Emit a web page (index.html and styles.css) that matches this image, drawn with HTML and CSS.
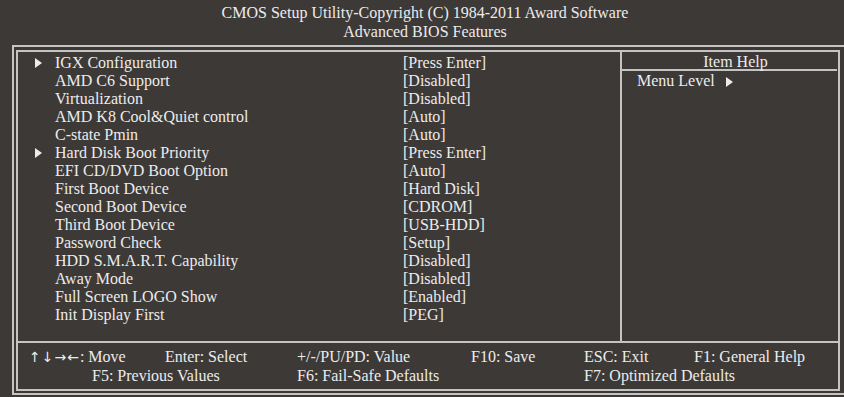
FILE: index.html
```html
<!DOCTYPE html>
<html>
<head>
<meta charset="utf-8">
<link rel="stylesheet" href="styles.css">
</head>
<body>
<div class="screen">
  <header class="title">
    <div>CMOS Setup Utility-Copyright (C) 1984-2011 Award Software</div>
    <div>Advanced BIOS Features</div>
  </header>
  <div class="outer">
    <div class="inner">
      <div class="main">
        <div class="items">
          <span class="arrow"></span><span>IGX Configuration</span><span>[Press Enter]</span>
          <span></span><span>AMD C6 Support</span><span>[Disabled]</span>
          <span></span><span>Virtualization</span><span>[Disabled]</span>
          <span></span><span>AMD K8 Cool&amp;Quiet control</span><span>[Auto]</span>
          <span></span><span>C-state Pmin</span><span>[Auto]</span>
          <span class="arrow"></span><span>Hard Disk Boot Priority</span><span>[Press Enter]</span>
          <span></span><span>EFI CD/DVD Boot Option</span><span>[Auto]</span>
          <span></span><span>First Boot Device</span><span>[Hard Disk]</span>
          <span></span><span>Second Boot Device</span><span>[CDROM]</span>
          <span></span><span>Third Boot Device</span><span>[USB-HDD]</span>
          <span></span><span>Password Check</span><span>[Setup]</span>
          <span></span><span>HDD S.M.A.R.T. Capability</span><span>[Disabled]</span>
          <span></span><span>Away Mode</span><span>[Disabled]</span>
          <span></span><span>Full Screen LOGO Show</span><span>[Enabled]</span>
          <span></span><span>Init Display First</span><span>[PEG]</span>
        </div>
        <aside class="help">
          <div class="help-title">Item Help</div>
          <div class="help-line">Menu Level <span class="arrow big"></span></div>
        </aside>
      </div>
      <footer class="keys">
        <span class="c1"><span class="arrows">↑↓→←</span>: Move</span>
        <span class="c2">Enter: Select</span>
        <span class="c3">+/-/PU/PD: Value</span>
        <span class="c4">F10: Save</span>
        <span class="c5">ESC: Exit</span>
        <span class="c6">F1: General Help</span>
        <span class="c1 f5">F5: Previous Values</span>
        <span class="c3">F6: Fail-Safe Defaults</span>
        <span class="c5 span2">F7: Optimized Defaults</span>
      </footer>
    </div>
  </div>
</div>
</body>
</html>
```

FILE: styles.css
```css
html, body {
  margin: 0;
  padding: 0;
  background: #3d3937;
  overflow: hidden;
}
.screen {
  width: 844px;
  height: 397px;
  background: #3d3937;
  color: #ececec;
  font-family: "Liberation Serif", "Times New Roman", serif;
  font-size: 16px;
  overflow: hidden;
}
.title {
  height: 45px;
  box-sizing: border-box;
  padding-top: 3px;
  line-height: 19px;
  text-align: center;
  padding-left: 6px;
}
.outer {
  margin-left: 12px;
  width: 840px;
  height: 350px;
  box-sizing: border-box;
  border: 2px solid #c4c4c4;
  padding: 3px 0 2px 2px;
}
.inner {
  width: 824px;
  height: 341px;
  box-sizing: border-box;
  border: 2px solid #c4c4c4;
  display: flex;
  flex-direction: column;
}
.main {
  display: flex;
  height: 291px;
  box-sizing: border-box;
  border-bottom: 2px solid #c4c4c4;
}
.items {
  width: 604px;
  box-sizing: border-box;
  border-right: 2px solid #c4c4c4;
  padding-top: 2px;
  display: grid;
  grid-template-columns: 37px 348px 1fr;
  grid-auto-rows: 18px;
  line-height: 18px;
  align-content: start;
}
.arrow {
  display: inline-block;
  width: 0;
  height: 0;
  border-top: 5px solid transparent;
  border-bottom: 5px solid transparent;
  border-left: 7px solid #ececec;
  margin: 4px 0 0 17px;
}
.help {
  flex: 1;
  padding-right: 1px;
}
.help-title {
  height: 17px;
  line-height: 19px;
  text-align: center;
  border-bottom: 2px solid #c4c4c4;
  padding-left: 12px;
}
.help-line {
  padding-left: 15px;
  line-height: 18px;
  margin-top: 1px;
}
.arrow.big {
  margin: 0 0 0 7px;
  vertical-align: -1px;
}
.arrows {
  font-family: "DejaVu Sans", sans-serif;
  font-size: 14px;
  letter-spacing: 1px;
}
.keys {
  display: grid;
  grid-template-columns: 11px 136px 132px 174px 113px 110px 1fr;
  grid-auto-rows: 19px;
  line-height: 19px;
  padding-top: 4px;
  white-space: nowrap;
}
.c1 { grid-column: 2; }
.c2 { grid-column: 3; }
.c3 { grid-column: 4; }
.c4 { grid-column: 5; }
.c5 { grid-column: 6; }
.c6 { grid-column: 7; }
.f5 { grid-column: 2 / span 2; padding-left: 63px; }
.span2 { grid-column: 6 / span 2; }
```
